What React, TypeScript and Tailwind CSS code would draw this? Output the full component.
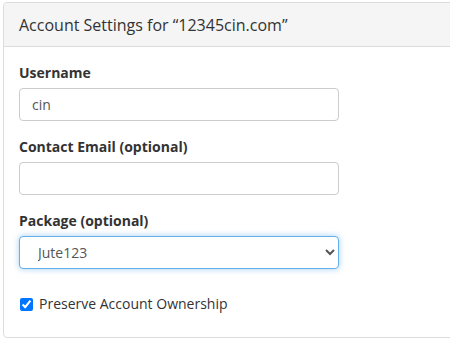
import React from 'react'

export default function App() {
  return (
    <div className="min-h-screen bg-white pl-[3px] pt-[2px]" style={{ fontFamily: '"Open Sans", sans-serif' }}>
      <div className="w-[460px] h-[336px] border border-[#dddddd] rounded-[4px] bg-white">
        <div className="h-[44px] bg-[#f5f5f5] border-b border-[#dddddd] rounded-t-[4px] pl-[15px] flex items-center">
          <h3 className="text-[16px] text-[#333333]">Account Settings for “12345cin.com”</h3>
        </div>
        <form className="pl-[15px] pt-[16px] w-[335px]">
          <div className="mb-[16px]">
            <label className="block text-[14px] leading-[20px] font-bold text-[#333333] mb-[5px]">Username</label>
            <input defaultValue="cin" className="w-full h-[33px] px-[12px] text-[14px] text-[#555555] border border-[#cccccc] rounded-[4px] outline-none" />
          </div>
          <div className="mb-[16px]">
            <label className="block text-[14px] leading-[20px] font-bold text-[#333333] mb-[5px]">Contact Email (optional)</label>
            <input className="w-full h-[33px] px-[12px] text-[14px] text-[#555555] border border-[#cccccc] rounded-[4px] outline-none" />
          </div>
          <div>
            <label className="block text-[14px] leading-[20px] font-bold text-[#333333] mb-[5px]">Package (optional)</label>
            <select className="w-full h-[33px] pl-[14px] pr-[8px] text-[14px] text-[#555555] bg-white border border-[#66afe9] rounded-[4px] outline-none shadow-[0_0_6px_rgba(102,175,233,0.6)]">
              <option>Jute123</option>
            </select>
          </div>
          <label className="flex items-center gap-[6px] text-[14px] leading-[20px] text-[#333333] mt-[25px]">
            <input type="checkbox" defaultChecked className="w-[13px] h-[13px] m-0 ml-[1px] accent-[#0075ff]" />
            Preserve Account Ownership
          </label>
        </form>
      </div>
    </div>
  )
}
